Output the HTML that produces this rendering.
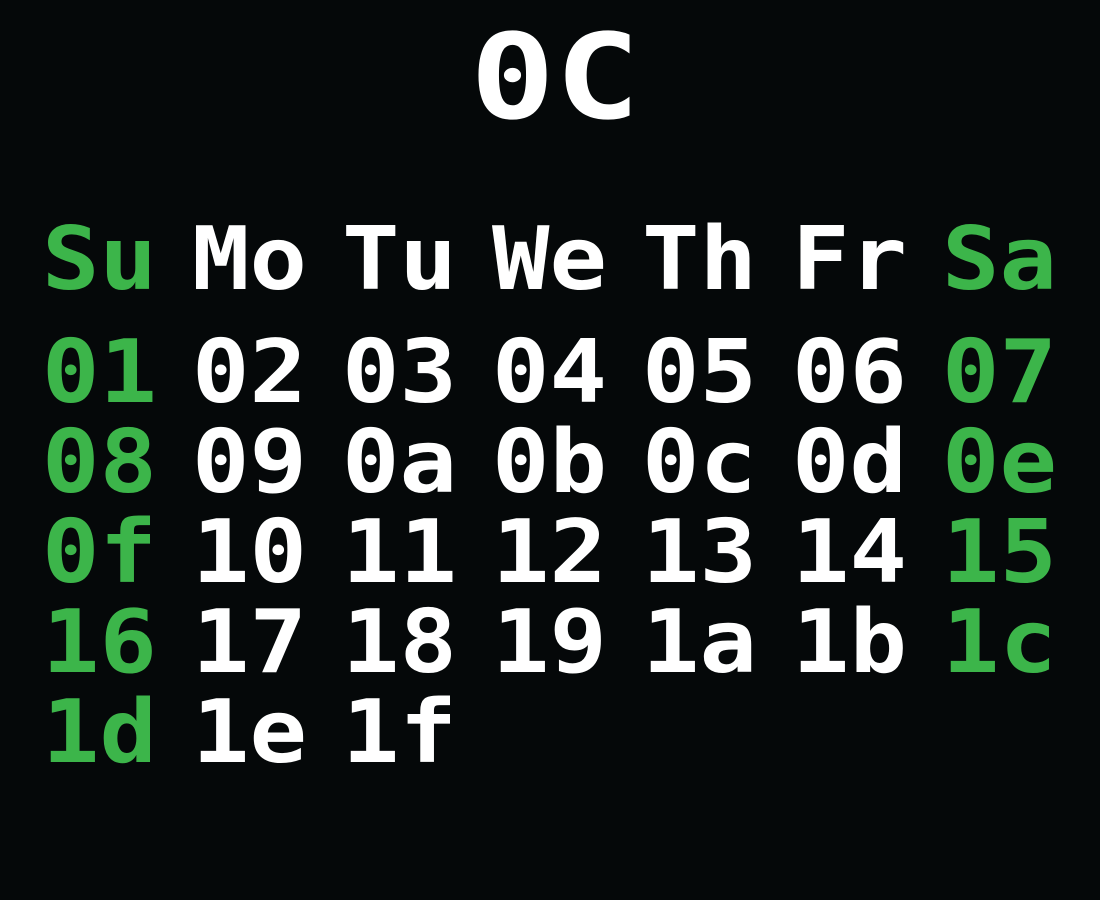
<!DOCTYPE html>
<html><head><meta charset="utf-8"><style>
html,body{margin:0;padding:0;background:#050809;}
svg{display:block}
text{font-family:"DejaVu Sans Mono","Liberation Mono",monospace;font-weight:bold;font-size:87px;}
.g{fill:#3cb54a}.w{fill:#fff}
</style></head><body>
<svg width="1100" height="900" xmlns="http://www.w3.org/2000/svg">
<rect width="1100" height="900" fill="#050809"/>
<text x="470" y="118" class="w" style="font-size:118px" textLength="170" lengthAdjust="spacingAndGlyphs">0C</text>
<g>
<text x="42" y="289" class="g" textLength="115" lengthAdjust="spacingAndGlyphs">Su</text><text x="192" y="289" class="w" textLength="115" lengthAdjust="spacingAndGlyphs">Mo</text><text x="342" y="289" class="w" textLength="115" lengthAdjust="spacingAndGlyphs">Tu</text><text x="492" y="289" class="w" textLength="115" lengthAdjust="spacingAndGlyphs">We</text><text x="642" y="289" class="w" textLength="115" lengthAdjust="spacingAndGlyphs">Th</text><text x="792" y="289" class="w" textLength="115" lengthAdjust="spacingAndGlyphs">Fr</text><text x="942" y="289" class="g" textLength="115" lengthAdjust="spacingAndGlyphs">Sa</text>

<text x="42" y="402" class="g" textLength="115" lengthAdjust="spacingAndGlyphs">01</text><text x="192" y="402" class="w" textLength="115" lengthAdjust="spacingAndGlyphs">02</text><text x="342" y="402" class="w" textLength="115" lengthAdjust="spacingAndGlyphs">03</text><text x="492" y="402" class="w" textLength="115" lengthAdjust="spacingAndGlyphs">04</text><text x="642" y="402" class="w" textLength="115" lengthAdjust="spacingAndGlyphs">05</text><text x="792" y="402" class="w" textLength="115" lengthAdjust="spacingAndGlyphs">06</text><text x="942" y="402" class="g" textLength="115" lengthAdjust="spacingAndGlyphs">07</text>

<text x="42" y="492" class="g" textLength="115" lengthAdjust="spacingAndGlyphs">08</text><text x="192" y="492" class="w" textLength="115" lengthAdjust="spacingAndGlyphs">09</text><text x="342" y="492" class="w" textLength="115" lengthAdjust="spacingAndGlyphs">0a</text><text x="492" y="492" class="w" textLength="115" lengthAdjust="spacingAndGlyphs">0b</text><text x="642" y="492" class="w" textLength="115" lengthAdjust="spacingAndGlyphs">0c</text><text x="792" y="492" class="w" textLength="115" lengthAdjust="spacingAndGlyphs">0d</text><text x="942" y="492" class="g" textLength="115" lengthAdjust="spacingAndGlyphs">0e</text>

<text x="42" y="582" class="g" textLength="115" lengthAdjust="spacingAndGlyphs">0f</text><text x="192" y="582" class="w" textLength="115" lengthAdjust="spacingAndGlyphs">10</text><text x="342" y="582" class="w" textLength="115" lengthAdjust="spacingAndGlyphs">11</text><text x="492" y="582" class="w" textLength="115" lengthAdjust="spacingAndGlyphs">12</text><text x="642" y="582" class="w" textLength="115" lengthAdjust="spacingAndGlyphs">13</text><text x="792" y="582" class="w" textLength="115" lengthAdjust="spacingAndGlyphs">14</text><text x="942" y="582" class="g" textLength="115" lengthAdjust="spacingAndGlyphs">15</text>

<text x="42" y="672" class="g" textLength="115" lengthAdjust="spacingAndGlyphs">16</text><text x="192" y="672" class="w" textLength="115" lengthAdjust="spacingAndGlyphs">17</text><text x="342" y="672" class="w" textLength="115" lengthAdjust="spacingAndGlyphs">18</text><text x="492" y="672" class="w" textLength="115" lengthAdjust="spacingAndGlyphs">19</text><text x="642" y="672" class="w" textLength="115" lengthAdjust="spacingAndGlyphs">1a</text><text x="792" y="672" class="w" textLength="115" lengthAdjust="spacingAndGlyphs">1b</text><text x="942" y="672" class="g" textLength="115" lengthAdjust="spacingAndGlyphs">1c</text>

<text x="42" y="762" class="g" textLength="115" lengthAdjust="spacingAndGlyphs">1d</text><text x="192" y="762" class="w" textLength="115" lengthAdjust="spacingAndGlyphs">1e</text><text x="342" y="762" class="w" textLength="115" lengthAdjust="spacingAndGlyphs">1f</text>
</g>
</svg>
</body></html>
